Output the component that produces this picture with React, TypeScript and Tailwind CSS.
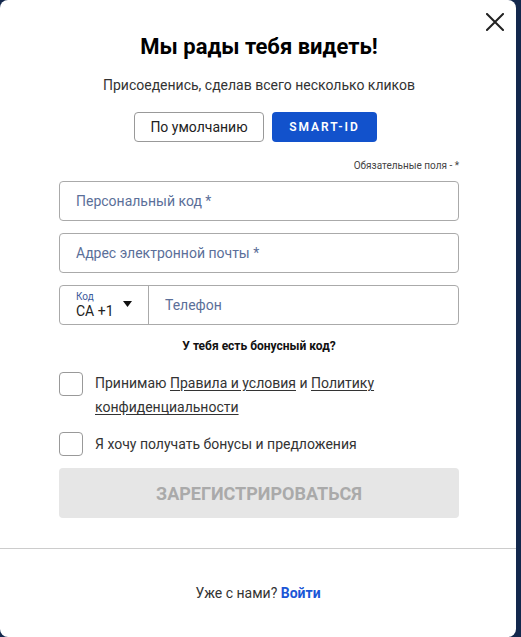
import React from 'react';

const font = { fontFamily: 'Roboto, "Noto Sans", sans-serif' };

const App: React.FC = () => {
  return (
    <div className="w-[521px] h-[637px] bg-[#13284d] overflow-hidden" style={font}>
      <div className="relative w-[516px] h-[637px] bg-white rounded-[8px] flex flex-col">
        <button className="absolute left-[486px] top-[13px]">
          <svg width="18" height="18" viewBox="0 0 18 18">
            <path d="M1 1L17 17M17 1L1 17" stroke="#222" strokeWidth="2" strokeLinecap="square" />
          </svg>
        </button>

        <div className="pl-[59px] pr-[57px] pt-[32px] flex flex-col">
          <h1 className="text-center text-[22px] leading-[30px] font-bold text-black">Мы рады тебя видеть!</h1>
          <p className="mt-[13px] text-center text-[14px] leading-[20px] text-[#333]">Присоеденись, сделав всего несколько кликов</p>

          <div className="mt-[17px] flex justify-center gap-[8px] pr-[7px]">
            <button className="w-[130px] h-[30px] rounded-[4px] border border-[#999] text-[14px] text-[#222]">По умолчанию</button>
            <button className="w-[105px] h-[30px] rounded-[4px] bg-[#1252cc] text-[12px] font-semibold tracking-[2px] text-white">SMART-ID</button>
          </div>

          <p className="mt-[17px] text-right text-[10px] leading-[14px] text-[#444]">Обязательные поля - *</p>

          <div className="mt-[8px] flex flex-col gap-[12px]">
            <div className="h-[40px] rounded-[4px] border border-[#aaa] flex items-center px-[16px] text-[14px] text-[#5b6f99]">Персональный код *</div>
            <div className="h-[40px] rounded-[4px] border border-[#aaa] flex items-center px-[16px] text-[14px] text-[#5b6f99]">Адрес электронной почты *</div>
            <div className="h-[40px] rounded-[4px] border border-[#aaa] flex">
              <div className="w-[89px] border-r border-[#aaa] flex items-center justify-between pl-[16px] pr-[16px]">
                <div className="flex flex-col">
                  <span className="text-[10px] leading-[12px] text-[#3d5a9c]">Код</span>
                  <span className="text-[14px] leading-[16px] text-[#222]">CA +1</span>
                </div>
                <svg width="9" height="6" viewBox="0 0 9 6" className="mb-[2px]">
                  <path d="M0 0h9L4.5 6z" fill="#111" />
                </svg>
              </div>
              <div className="flex items-center pl-[16px] text-[14px] text-[#5b6f99]">Телефон</div>
            </div>
          </div>

          <p className="mt-[13px] text-center text-[12px] leading-[16px] font-bold text-[#111]">У тебя есть бонусный код?</p>

          <div className="mt-[18px] flex gap-[12px]">
            <div className="w-[24px] h-[24px] shrink-0 rounded-[4px] border border-[#999]" />
            <p className="text-[14px] leading-[24px] text-[#333] -mt-[1px]">
              Принимаю <span className="underline underline-offset-2">Правила и условия</span> и <span className="underline underline-offset-2">Политику конфиденциальности</span>
            </p>
          </div>

          <div className="mt-[13px] flex gap-[12px] items-center">
            <div className="w-[24px] h-[24px] shrink-0 rounded-[4px] border border-[#999]" />
            <p className="text-[14px] leading-[24px] text-[#333]">Я хочу получать бонусы и предложения</p>
          </div>

          <button className="mt-[12px] h-[50px] rounded-[4px] bg-[#e6e6e6] text-[18px] font-bold text-[#aaa]">ЗАРЕГИСТРИРОВАТЬСЯ</button>
        </div>

        <div className="mt-[30px] border-t border-[#ccc]" />

        <p className="mt-[34px] text-center text-[14px] leading-[20px] text-[#333]">
          Уже с нами? <span className="font-bold text-[#1a56d6]">Войти</span>
        </p>
      </div>
    </div>
  );
};

export default App;
